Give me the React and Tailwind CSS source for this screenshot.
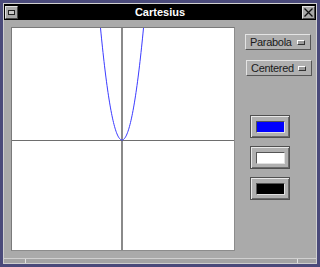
const curve = () => {
  const pts = [];
  for (let x = 86; x <= 134; x += 0.5) {
    const y = 112 - 0.2424 * (x - 110) * (x - 110);
    pts.push(`${x.toFixed(1)},${y.toFixed(2)}`);
  }
  return "M" + pts.join(" L");
};

const OptionButton = ({ label }) => (
  <div className="flex h-[16px] w-[66px] items-center justify-between border-t border-l border-t-[#e4e4e4] border-l-[#e4e4e4] border-b border-r border-b-[#555] border-r-[#555] bg-[#b0b0b0] pl-[4px] pr-[5px] text-[11px] leading-none tracking-[-0.3px] text-[#1a1a1a]">
    <span>{label}</span>
    <span className="h-[5px] w-[8px] border-t border-l border-t-white border-l-white border-b border-r border-b-[#333] border-r-[#333] bg-[#9a9a9a]" />
  </div>
);

const ColorButton = ({ color }) => (
  <div className="flex h-[23px] w-[40px] items-center justify-center border border-[#505050] bg-[#b0b0b0] shadow-[inset_1px_1px_0_#e8e8e8,inset_-1px_-1px_0_#6a6a6a]">
    <div
      className={`h-[12px] w-[29px] border-t border-l border-t-[#555] border-l-[#555] border-b border-r border-b-[#e0e0e0] border-r-[#e0e0e0] ${color}`}
    />
  </div>
);

export default function App() {
  return (
    <div className="h-[267px] w-[320px] bg-[#4a4a7a] p-[3px] font-['Liberation_Sans',sans-serif]">
      <div className="flex h-full flex-col border border-[#cfcfcf] bg-[#aaaaaa]">
        {/* title bar */}
        <div className="flex h-[16px] items-center justify-between bg-black px-[1px]">
          <div className="flex h-[13px] w-[13px] items-center justify-center border border-t-[#e0e0e0] border-l-[#e0e0e0] border-b-[#444] border-r-[#444] bg-[#a8a8a8]">
            <div className="h-[5px] w-[7px] border border-[#222] bg-[#c8c8c8]" />
          </div>
          <span className="text-[11px] font-bold leading-none text-white">Cartesius</span>
          <div className="flex h-[13px] w-[13px] items-center justify-center border border-t-[#e0e0e0] border-l-[#e0e0e0] border-b-[#444] border-r-[#444] bg-[#a8a8a8]">
            <svg width="9" height="9" viewBox="0 0 9 9">
              <path d="M0.5 0.5 L8.5 8.5 M8.5 0.5 L0.5 8.5" stroke="#111" strokeWidth="1.3" />
            </svg>
          </div>
        </div>

        {/* body */}
        <div className="flex h-[238px]">
          <div className="ml-[7px] mt-[7px] h-[224px] w-[224px] border border-t-[#7a7a7a] border-l-[#7a7a7a] border-b-[#8c8c8c] border-r-[#8c8c8c] bg-white">
            <svg width="222" height="222" viewBox="0 0 222 222" className="block">
              <line x1="110" y1="0" x2="110" y2="222" stroke="#8a8a8a" strokeWidth="2" />
              <line x1="0" y1="112.5" x2="222" y2="112.5" stroke="#6e6e6e" strokeWidth="1" />
              <path d={curve()} fill="none" stroke="#3b3bff" strokeWidth="1" />
            </svg>
          </div>
          <div className="ml-[10px] flex flex-col">
            <div className="mt-[14px] flex flex-col gap-[10px]">
              <OptionButton label="Parabola" />
              <div className="ml-[1px]">
                <OptionButton label="Centered" />
              </div>
            </div>
            <div className="ml-[5px] mt-[39px] flex flex-col gap-[8px]">
              <ColorButton color="bg-[#0000ff]" />
              <ColorButton color="bg-white" />
              <ColorButton color="bg-black" />
            </div>
          </div>
        </div>

        {/* status strip */}
        <div className="flex h-[5px] border-t border-[#d0d0d0] bg-[#a4a4a4]">
          <div className="ml-[21px] h-full w-[1px] bg-[#e0e0e0]" />
          <div className="ml-auto mr-[18px] h-full w-[1px] bg-[#e0e0e0]" />
        </div>
      </div>
    </div>
  );
}
